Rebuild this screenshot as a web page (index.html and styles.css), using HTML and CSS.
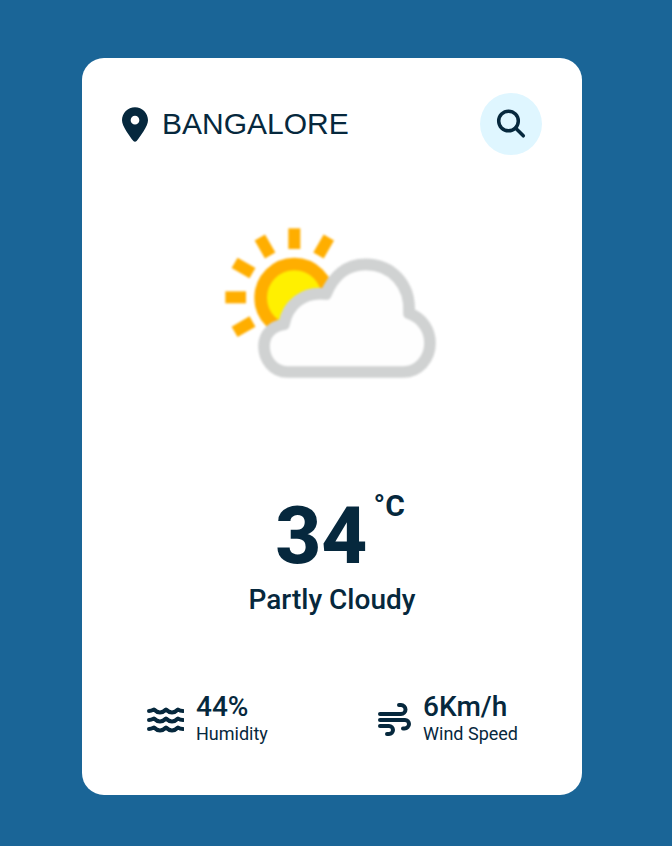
FILE: index.html
```html
<!DOCTYPE html>
<html lang="en">
<head>
<meta charset="utf-8">
<meta name="viewport" content="width=device-width, initial-scale=1">
<title>Weather</title>
<link rel="stylesheet" href="styles.css">
</head>
<body>
<main class="card">
  <form class="search">
    <label class="search-label" for="city" aria-label="City">
      <svg class="pin" viewBox="0 0 384 512"><path d="M215.700 499.200C267 435 384 279.400 384 192 384 86 298 0 192 0S0 86 0 192c0 87.400 117 243 168.300 307.200 12.300 15.300 35.100 15.300 47.400 0zM192 128a64 64 0 1 1 0 128 64 64 0 1 1 0-128z"/></svg>
    </label>
    <input class="search-input" id="city" type="text" value="Bangalore">
    <button class="search-button" type="submit" aria-label="Search">
      <svg class="glass" viewBox="0 0 30 30"><circle cx="12.500" cy="12" r="9.800"/><path d="M19.500 19L27.300 26.800"/></svg>
    </button>
  </form>
  <section class="weather">
    <svg class="weather-icon" viewBox="6 0 720 525" aria-hidden="true">
      <circle class="sun" cx="253" cy="248" r="101"/>
      <g class="rays">
        <path d="M253 40V102"/>
        <path d="M253 40V102" transform="rotate(30 253 247)"/>
        <path d="M253 40V102" transform="rotate(-30 253 247)"/>
        <path d="M253 40V102" transform="rotate(-60 253 247)"/>
        <path d="M253 40V102" transform="rotate(-90 253 247)"/>
        <path d="M253 40V102" transform="rotate(-120 253 247)"/>
      </g>
      <path class="cloud" d="M232 471C190 471 162 434 162 394C162 360 184 335 222 328C232 270 280 228 348 237C370 182 410 148 467 148C545 148 603 208 597 295C638 310 660 345 660 385C660 433 624 471 580 471Z"/>
    </svg>
    <h1 class="temperature">34<sup class="unit">°C</sup></h1>
    <p class="description">Partly Cloudy</p>
  </section>
  <section class="details">
    <div class="detail">
      <svg class="detail-icon" viewBox="0 0 38 38"><path d="M3 12Q5 12 8 10.500Q11 13.500 14 13.500Q17 13.500 20 10.500Q23 13.500 26 13.500Q29 13.500 32 10.500Q34 12 37 12M3 21Q5 21 8 19.500Q11 22.500 14 22.500Q17 22.500 20 19.500Q23 22.500 26 22.500Q29 22.500 32 19.500Q34 21 37 21M3 30Q5 30 8 28.500Q11 31.500 14 31.500Q17 31.500 20 28.500Q23 31.500 26 31.500Q29 31.500 32 28.500Q34 30 37 30"/></svg>
      <div><p class="value">44%</p><p class="name">Humidity</p></div>
    </div>
    <div class="detail">
      <svg class="detail-icon" viewBox="0 0 38 38"><path d="M7 15H28A4.500 4.500 0 0 0 32.500 10.500A4.500 4.500 0 0 0 28 6H26M7 21H32A4 4 0 0 1 36 25A4.500 4.500 0 0 1 31.500 29.500H30M7 27H16A4 4 0 0 1 20 31A4 4 0 0 1 16 35H14"/></svg>
      <div><p class="value">6Km/h</p><p class="name">Wind Speed</p></div>
    </div>
  </section>
</main>
</body>
</html>
```
FILE: styles.css
```css
* {
  box-sizing: border-box;
  margin: 0;
  padding: 0;
}

body {
  min-height: 100vh;
  padding: 58px 16px 48px 8px;
  background: #1a6597;
  color: #06283d;
  font-family: Roboto, sans-serif;
  font-weight: 500;
}

.card {
  max-width: 500px;
  margin: 0 auto;
  padding: 35px 40px 51px;
  border-radius: 22px;
  background: #fff;
}

.search {
  display: flex;
  align-items: center;
}

.search-label {
  display: flex;
}

.pin {
  width: 26px;
  height: 35px;
  fill: #06283d;
}

.search-input {
  flex: 1;
  min-width: 0;
  margin-left: 14px;
  border: 0;
  outline: 0;
  background: none;
  color: #06283d;
  font: 30px "Liberation Sans", sans-serif;
  text-transform: uppercase;
}

.search-button {
  display: flex;
  align-items: center;
  justify-content: center;
  width: 62px;
  height: 62px;
  border: 0;
  border-radius: 50%;
  background: #dff6ff;
  cursor: pointer;
}

.glass {
  width: 30px;
  height: 30px;
  fill: none;
  stroke: #06283d;
  stroke-width: 3.500;
  stroke-linecap: round;
}

.weather {
  display: flex;
  flex-direction: column;
  align-items: center;
  padding-top: 60px;
}

.weather-icon {
  width: 240px;
  height: 175px;
  filter: blur(1px);
}

.sun {
  fill: #fff000;
  stroke: #ffae00;
  stroke-width: 38;
}

.rays {
  fill: none;
  stroke: #ffae00;
  stroke-width: 36;
}

.cloud {
  fill: #fefefe;
  stroke: #d0d2d2;
  stroke-width: 35;
  stroke-linejoin: round;
}

.temperature {
  display: flex;
  gap: 6px;
  margin-top: 98px;
  padding-left: 16px;
  font-size: 80px;
  font-weight: 800;
  line-height: 96px;
}

.unit {
  font-size: 30px;
  font-weight: 700;
  line-height: 36px;
}

.description {
  font-size: 28px;
  line-height: 32px;
}

.details {
  display: flex;
  justify-content: space-between;
  margin-top: 75px;
  padding: 0 24px;
}

.detail {
  display: flex;
  align-items: center;
  gap: 12px;
}

.detail-icon {
  width: 38px;
  height: 38px;
  fill: none;
  stroke: #06283d;
  stroke-width: 4;
  stroke-linecap: round;
  stroke-linejoin: round;
}

.value {
  font-size: 28px;
  line-height: 32px;
}

.name {
  font-size: 18px;
  font-weight: 400;
  line-height: 21px;
}
```
